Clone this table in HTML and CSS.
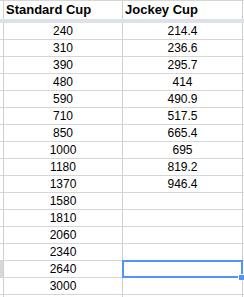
FILE: index.html
```html
<!DOCTYPE html>
<html>
<head>
<meta charset="utf-8">
<link rel="stylesheet" href="styles.css">
</head>
<body>
<div class="sheet">
  <div class="row head">
    <div class="rh"></div>
    <div class="cell hd">Standard Cup</div>
    <div class="cell hd">Jockey Cup</div>
    <div class="cell rest"></div>
  </div>
  <div class="band"></div>
  <div class="row"><div class="rh"></div><div class="cell">240</div><div class="cell">214.4</div><div class="cell rest"></div></div>
  <div class="row"><div class="rh"></div><div class="cell">310</div><div class="cell">236.6</div><div class="cell rest"></div></div>
  <div class="row"><div class="rh"></div><div class="cell">390</div><div class="cell">295.7</div><div class="cell rest"></div></div>
  <div class="row"><div class="rh"></div><div class="cell">480</div><div class="cell">414</div><div class="cell rest"></div></div>
  <div class="row"><div class="rh"></div><div class="cell">590</div><div class="cell">490.9</div><div class="cell rest"></div></div>
  <div class="row"><div class="rh"></div><div class="cell">710</div><div class="cell">517.5</div><div class="cell rest"></div></div>
  <div class="row"><div class="rh"></div><div class="cell">850</div><div class="cell">665.4</div><div class="cell rest"></div></div>
  <div class="row"><div class="rh"></div><div class="cell">1000</div><div class="cell">695</div><div class="cell rest"></div></div>
  <div class="row"><div class="rh"></div><div class="cell">1180</div><div class="cell">819.2</div><div class="cell rest"></div></div>
  <div class="row"><div class="rh"></div><div class="cell">1370</div><div class="cell">946.4</div><div class="cell rest"></div></div>
  <div class="row"><div class="rh"></div><div class="cell">1580</div><div class="cell"></div><div class="cell rest"></div></div>
  <div class="row"><div class="rh"></div><div class="cell">1810</div><div class="cell"></div><div class="cell rest"></div></div>
  <div class="row"><div class="rh"></div><div class="cell">2060</div><div class="cell"></div><div class="cell rest"></div></div>
  <div class="row"><div class="rh"></div><div class="cell">2340</div><div class="cell"></div><div class="cell rest"></div></div>
  <div class="row"><div class="rh active"></div><div class="cell">2640</div><div class="cell selected"><span class="handle"></span></div><div class="cell rest"></div></div>
  <div class="row"><div class="rh"></div><div class="cell">3000</div><div class="cell"></div><div class="cell rest"></div></div>
  <div class="row"><div class="rh"></div><div class="cell"></div><div class="cell"></div><div class="cell rest"></div></div>
</div>
</body>
</html>
```
FILE: styles.css
```css
html, body {
  margin: 0;
  padding: 0;
  background: #ffffff;
  overflow: hidden;
}
body {
  font-family: "Liberation Sans", Arial, sans-serif;
  color: #000000;
  width: 244px;
  height: 297px;
}
.sheet {
  display: flex;
  flex-direction: column;
  width: 244px;
  height: 297px;
  overflow: hidden;
}
.row {
  display: grid;
  grid-template-columns: 4px 119px 120px 1fr;
  height: 17px;
  flex: none;
}
.row.head {
  height: 19px;
}
.rh {
  border-right: 1px solid #cfcfcf;
  border-bottom: 1px solid #d6d6d6;
  background: #ffffff;
}
.rh.active {
  background: #d8d8d8;
}
.cell {
  border-right: 1px solid #cfcfcf;
  border-bottom: 1px solid #d6d6d6;
  font-size: 12px;
  line-height: 16px;
  text-align: center;
  white-space: nowrap;
  position: relative;
}
.cell.rest {
  border-right: none;
}
.head .rh,
.head .cell {
  border-bottom: none;
  border-top: 1px solid #d6d6d6;
}
.cell.hd {
  font-weight: bold;
  font-size: 13px;
  line-height: 16px;
  padding-top: 1px;
  text-align: left;
  padding-left: 2px;
}
.band {
  height: 4px;
  background: #dde2ea;
  flex: none;
}
.selected::after {
  content: "";
  position: absolute;
  left: -1px;
  top: -1px;
  right: -1px;
  bottom: -1px;
  border: 2px solid #5394f7;
}
.handle {
  position: absolute;
  right: -3px;
  bottom: -4px;
  width: 5px;
  height: 5px;
  background: #5394f7;
  border: 1px solid #ffffff;
  z-index: 2;
}
```
